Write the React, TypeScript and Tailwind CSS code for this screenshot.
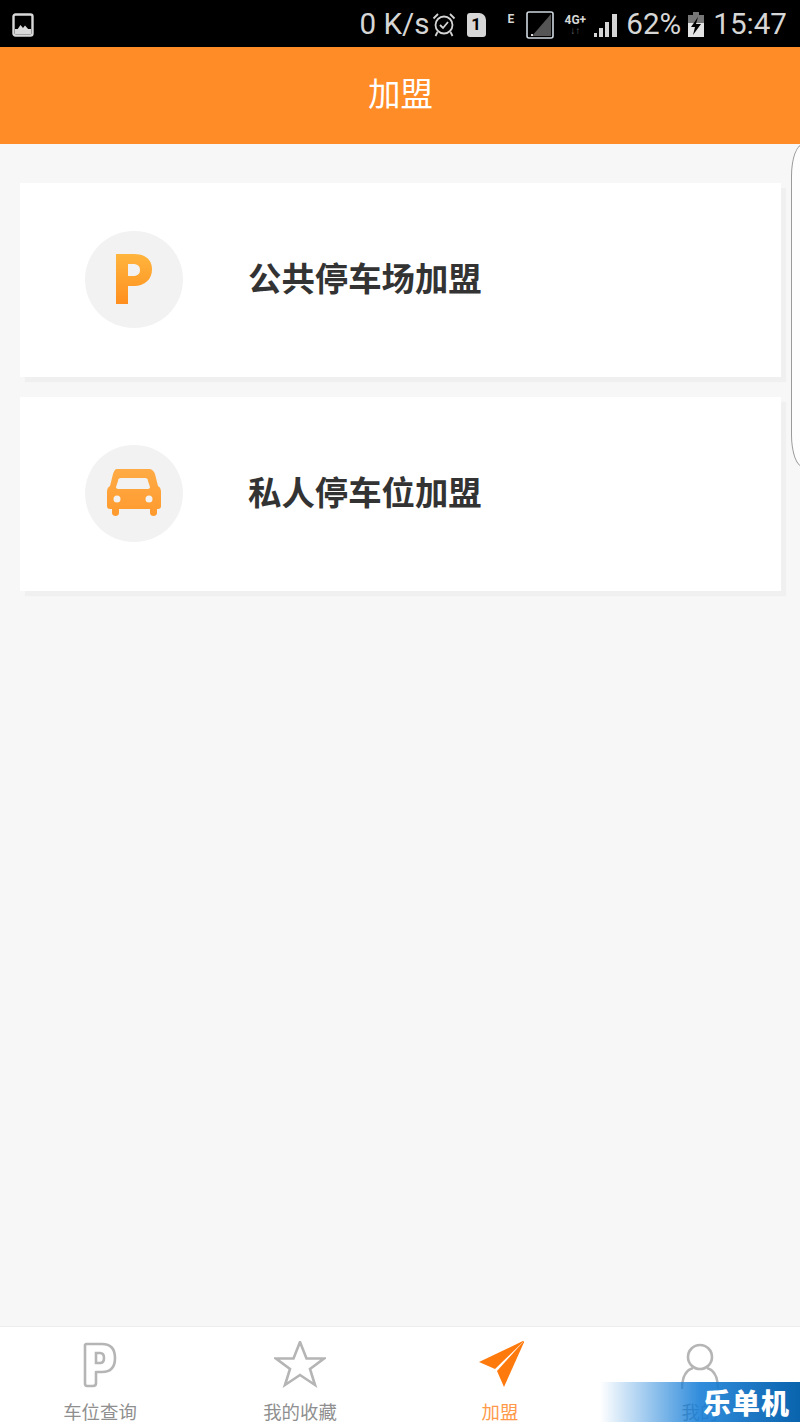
const cjk = 'font-["Noto_Sans_CJK_SC","Noto_Sans",sans-serif]'

function GalleryIcon() {
  return (
    <svg width="22" height="24" viewBox="0 0 22 24" fill="none">
      <rect x="1.5" y="1.5" width="19" height="21" rx="2" fill="#000" stroke="#d9d9d9" strokeWidth="2.4" />
      <rect x="3" y="16" width="16" height="5" fill="#d9d9d9" />
      <path d="M5 17l3.5-5 2.5 3 2-2.500 4 4.500z" fill="#d9d9d9" />
    </svg>
  )
}

function AlarmIcon() {
  return (
    <svg width="24" height="28" viewBox="0 0 24 28" fill="none" stroke="#d4d4d4" strokeWidth="1.800">
      <circle cx="12" cy="14" r="8.500" />
      <path d="M8 14l3 3 5-6" />
      <path d="M1.500 7.500L6 3M22.500 7.500L18 3M5.500 21l-2 4M18.500 21l2 4" />
    </svg>
  )
}

function SimIcon() {
  return (
    <div className="relative flex h-[24px] w-[19px] items-center justify-center rounded-[3px] rounded-tr-[7px] bg-[#d6d6d6] text-[17px] font-bold text-black">
      1
    </div>
  )
}

function FrameSignalIcon() {
  return (
    <svg width="28" height="28" viewBox="0 0 28 28" fill="none">
      <rect x="1" y="1" width="26" height="26" rx="2" stroke="#d0d8e0" strokeWidth="1.600" />
      <path d="M25 3v22H6z" fill="#555" />
      <rect x="5" y="23" width="2" height="2" fill="#ddd" />
    </svg>
  )
}

function SignalBars() {
  return (
    <svg width="24" height="24" viewBox="0 0 24 24" fill="#d6d6d6">
      <rect x="0" y="20" width="3" height="4" />
      <rect x="5" y="15" width="4" height="9" />
      <rect x="11" y="9" width="4" height="15" />
      <rect x="18" y="1" width="5" height="23" />
    </svg>
  )
}

function BatteryIcon() {
  return (
    <svg width="16" height="25" viewBox="0 0 16 25">
      <rect x="5" y="0" width="6" height="3" fill="#777" />
      <rect x="0" y="3" width="16" height="22" fill="#e4e4e4" />
      <rect x="0" y="3" width="16" height="8" fill="#777" />
      <path d="M10 5L3 15h4l-2 8 8-11H8z" fill="#000" />
    </svg>
  )
}

function StatusBar() {
  return (
    <div className="flex h-[47px] items-center justify-between bg-black pl-[12px] pr-[13px] pt-[2px] font-['Roboto',sans-serif] text-[#d6d6d6]">
      <GalleryIcon />
      <div className="flex items-center">
        <span className="text-[29.6px] leading-none">0 K/s</span>
        <span className="ml-[2px]"><AlarmIcon /></span>
        <span className="ml-[11px]"><SimIcon /></span>
        <span className="mb-[12px] ml-[22px] text-[12px] font-bold leading-none">E</span>
        <span className="ml-[12px]"><FrameSignalIcon /></span>
        <div className="ml-[9px] flex w-[24px] flex-col items-center">
          <span className="text-[12px] font-bold leading-[12px]">4G+</span>
          <span className="text-[10px] leading-[10px] text-[#666]">↓↑</span>
        </div>
        <span className="ml-[7px]"><SignalBars /></span>
        <span className="ml-[8px] text-[29.6px] leading-none">62%</span>
        <span className="ml-[7px]"><BatteryIcon /></span>
        <span className="ml-[9px] text-[29.6px] leading-none">15:47</span>
      </div>
    </div>
  )
}

function ParkingBadge() {
  return (
    <svg width="40" height="52" viewBox="0 0 40 52">
      <defs>
        <linearGradient id="pGrad" x1="0" y1="0" x2="0" y2="1">
          <stop offset="0" stopColor="#ffb53d" />
          <stop offset="1" stopColor="#ff8f1f" />
        </linearGradient>
      </defs>
      <path
        fillRule="evenodd"
        d="M2 1h18c12 0 18 6 18 15.500S31 33 20 33h-6v18H2zM14 11v12h5c5 0 7-2.500 7-6s-2-6-7-6z"
        fill="url(#pGrad)"
      />
    </svg>
  )
}

function CarBadge() {
  return (
    <svg width="54" height="48" viewBox="0 0 54 48">
      <defs>
        <linearGradient id="carGrad" x1="0" y1="0" x2="0" y2="1">
          <stop offset="0" stopColor="#ffab45" />
          <stop offset="1" stopColor="#ff9a2e" />
        </linearGradient>
      </defs>
      <path
        fillRule="evenodd"
        d="M10 0h32c3 0 5 2 6 5l3 12c2 1 3 3 3 6v14c0 2-1 3-3 3h-1v4c0 4-7 4-7 0v-4H12v4c0 4-7 4-7 0v-4H3c-2 0-3-1-3-3V23c0-3 1-5 3-6l3-12c1-3 2-5 4-5zM14 9c-2 0-3 1-3 3l-2 6c0 1 1 2 2 2h30c1 0 2-1 2-2l-2-6c0-2-1-3-3-3zM10 26.500a3.500 3.500 0 1 0 0 7 3.500 3.500 0 0 0 0-7zM42 26.500a3.500 3.500 0 1 0 0 7 3.500 3.500 0 0 0 0-7z"
        fill="url(#carGrad)"
      />
    </svg>
  )
}

function JoinCard({ icon, title }: { icon: React.ReactNode; title: string }) {
  return (
    <div className="flex h-[194px] items-center bg-white pb-[2px] pl-[65px] shadow-[5px_5px_1px_#f0f0f0]">
      <div className="flex h-[97px] w-[98px] shrink-0 items-center justify-center rounded-full bg-[#f2f2f2]">
        {icon}
      </div>
      <span className={`mb-[5px] ml-[65px] text-[33.4px] font-bold leading-none text-[#333] ${cjk}`}>{title}</span>
    </div>
  )
}

const TAB_STROKE = '#b5b5b5'

const tabs = [
  {
    label: '车位查询',
    icon: (
      <svg width="36" height="46" viewBox="-1 0 36 46" fill="none" stroke={TAB_STROKE} strokeWidth="2.600">
        <path d="M3 2h16c9 0 13 5 13 14s-4 14-13 14h-6v11c0 2-1 3-3 3H4c-1 0-2-1-2-3V3z" strokeLinejoin="round" />
        <path d="M13 11v10h4c3 0 4-2 4-5s-1-5-4-5z" />
      </svg>
    ),
  },
  {
    label: '我的收藏',
    icon: (
      <svg width="52" height="48" viewBox="0 2 52 48" fill="none" stroke={TAB_STROKE} strokeWidth="2.600">
        <path d="M26 3l6.500 16.500H50L36 30l5 16-15-10-15 10 5-16L2 19.500h17.500z" strokeLinejoin="miter" />
      </svg>
    ),
  },
  {
    label: '加盟',
    active: true,
    icon: (
      <svg width="48" height="48" viewBox="-2 2 48 48">
        <path d="M47 1L1 23l16 7z" fill="#ff7a0d" />
        <path d="M47 1L19 32l7 16z" fill="#ff7a0d" />
      </svg>
    ),
  },
  {
    label: '我的',
    icon: (
      <svg width="38" height="48" viewBox="0 -2 38 48" fill="none" stroke={TAB_STROKE} strokeWidth="2.600">
        <circle cx="19" cy="14" r="12" />
        <path d="M1 46c0-12 4-19 11-21M37 46c0-12-4-19-11-21" />
      </svg>
    ),
  },
]

function TabBar() {
  return (
    <div className="grid h-[96px] grid-cols-4 border-t border-[#ededed] bg-white">
      {tabs.map(tab => (
        <div key={tab.label} className="flex flex-col items-center pt-[13px]">
          <div className="flex h-[50px] items-center justify-center">{tab.icon}</div>
          <span
            className={`mt-[9px] text-[18.400px] leading-[24px] ${cjk} ${tab.active ? 'text-[#ff9a4a]' : 'text-[#8f8f8f]'}`}
          >
            {tab.label}
          </span>
        </div>
      ))}
    </div>
  )
}

export default function App() {
  return (
    <div className="relative flex h-[1422px] w-[800px] flex-col overflow-hidden bg-[#f7f7f7]">
      <StatusBar />

      {/* Title bar */}
      <div className={`flex h-[97px] items-center justify-center bg-[#ff8c26] pb-[6px] pl-[1px] text-[32.5px] text-white ${cjk}`}>
        加盟
      </div>

      {/* Cards */}
      <div className="flex flex-1 flex-col gap-[20px] pl-[20px] pr-[19px] pt-[39px]">
        <JoinCard icon={<ParkingBadge />} title="公共停车场加盟" />
        <JoinCard icon={<CarBadge />} title="私人停车位加盟" />
      </div>

      <TabBar />

      {/* Side handle overlay */}
      <div className="absolute left-[791px] top-[144px] h-[323px] w-[30px] rounded-tl-[12px_32px] rounded-bl-[12px_32px] border border-[#9a9a9a] bg-[#fdfdfd]" />

      {/* Watermark */}
      <div className="absolute bottom-0 right-0 flex h-[40px] w-[200px] items-center justify-end bg-gradient-to-r from-transparent via-[#1a80d8]/90 via-50% to-[#0a63ad] pr-[10px]">
        <span className={`text-[28px] font-black leading-none tracking-[1px] text-white ${cjk}`}>乐单机</span>
      </div>
    </div>
  )
}
